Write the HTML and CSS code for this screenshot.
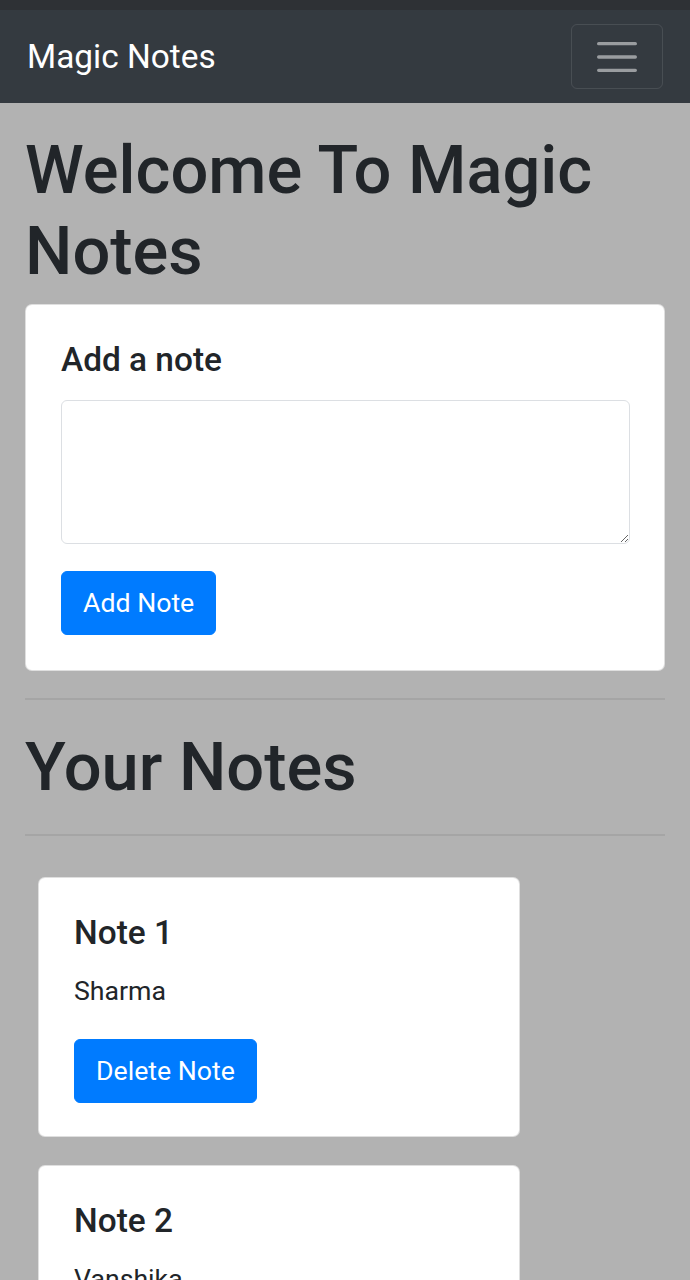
FILE: index.html
```html
<!DOCTYPE html>
<html lang="en">
<head>
<meta charset="utf-8">
<meta name="viewport" content="width=device-width, initial-scale=1">
<title>Magic Notes</title>
<link rel="stylesheet" href="styles.css">
</head>
<body>
<nav class="navbar">
  <a class="brand" href="#">Magic Notes</a>
  <button class="toggler" type="button" aria-label="Toggle navigation">
    <svg class="toggler-icon" viewBox="0 0 30 30" xmlns="http://www.w3.org/2000/svg">
      <path stroke="rgba(255,255,255,0.5)" stroke-linecap="round" stroke-miterlimit="10" stroke-width="2" d="M4 7h22M4 15h22M4 23h22"/>
    </svg>
  </button>
</nav>
<main class="container">
  <h1 class="title">Welcome To Magic Notes</h1>
  <div class="card">
    <div class="card-body add-body">
      <h5 class="card-title add-title">Add a note</h5>
      <div class="form-group">
        <textarea class="form-control" rows="3"></textarea>
      </div>
      <button class="btn" type="button">Add Note</button>
    </div>
  </div>
  <hr class="rule rule-top">
  <h1 class="title your">Your Notes</h1>
  <hr class="rule">
  <div class="notes">
    <div class="card note">
      <div class="card-body">
        <h5 class="card-title">Note 1</h5>
        <p class="card-text">Sharma</p>
        <button class="btn" type="button">Delete Note</button>
      </div>
    </div>
    <div class="card note">
      <div class="card-body">
        <h5 class="card-title">Note 2</h5>
        <p class="card-text">Vanshika</p>
        <button class="btn" type="button">Delete Note</button>
      </div>
    </div>
  </div>
</main>
</body>
</html>
```

FILE: styles.css
```css
* { box-sizing: border-box; }

html, body {
  margin: 0;
  padding: 0;
}

body {
  background: #b2b2b2;
  color: #212529;
  font-family: Roboto, "Liberation Sans", Arial, sans-serif;
  font-size: 26.7px;
  line-height: 1.5;
  overflow: hidden;
}

.navbar {
  background: #343a40;
  border-top: 10px solid #2e3135;
  padding: 14px 27px;
  display: flex;
  align-items: center;
  justify-content: space-between;
}

.brand {
  color: #fff;
  text-decoration: none;
  font-size: 33.4px;
  line-height: 1.5;
  font-weight: 400;
}

.toggler {
  background: transparent;
  border: 1px solid rgba(255,255,255,0.1);
  border-radius: 6px;
  padding: 6.7px 20px;
  display: flex;
  line-height: 1;
}

.toggler-icon {
  width: 50px;
  height: 50px;
  display: block;
}

.container {
  padding: 27px 25px 0;
}

.title {
  font-size: 66.8px;
  font-weight: 500;
  line-height: 1.2;
  margin: 0 0 13px;
}

.card {
  background: #fff;
  border: 1px solid rgba(0,0,0,0.125);
  border-radius: 7px;
}

.card-body {
  padding: 35px 35px 33px;
}

.add-body {
  padding: 35px 34px 35px 35px;
}

.card-title {
  font-size: 33.4px;
  font-weight: 500;
  line-height: 1.2;
  margin: 0 0 18px;
}

.add-title {
  margin-bottom: 20px;
}

.form-group {
  margin-bottom: 27px;
}

.form-control {
  display: block;
  width: 100%;
  height: 144px;
  border: 1px solid #dcdfe3;
  border-radius: 6px;
  background: #fff;
  font: inherit;
  resize: vertical;
}

.btn {
  background: #007bff;
  color: #fff;
  border: 1px solid #007bff;
  border-radius: 6px;
  font-family: inherit;
  font-size: 26.7px;
  line-height: 1.5;
  padding: 11px 21px;
  cursor: pointer;
}

.rule {
  border: 0;
  border-top: 2px solid rgba(0,0,0,0.07);
  margin: 0 0 27px;
}

.rule-top {
  margin-top: 27px;
}

.your {
  margin-bottom: 27px;
}

.notes {
  display: flex;
  flex-direction: column;
  gap: 28px;
  padding: 14px 13px;
}

.note {
  width: 482px;
}

.card-text {
  margin: 0 0 28px;
}
```
